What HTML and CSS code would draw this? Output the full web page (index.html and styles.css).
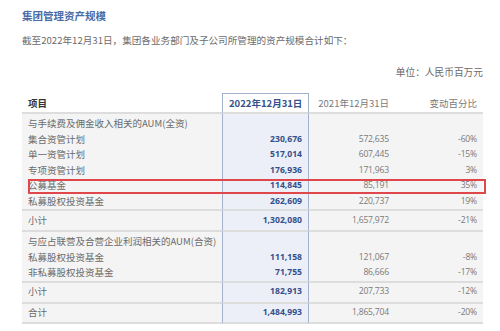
FILE: index.html
```html
<!DOCTYPE html>
<html lang="zh-CN">
<head>
  <meta charset="UTF-8">
  <meta name="viewport" content="width=device-width, initial-scale=1.0">
  <title>集团管理资产规模</title>
  <link rel="stylesheet" href="styles.css">
</head>
<body>
  <main class="report">
    <h1 class="report-title">集团管理资产规模</h1>
    <p class="report-intro">截至2022年12月31日，集团各业务部门及子公司所管理的资产规模合计如下：</p>
    <p class="report-unit">单位：人民币百万元</p>
    <div class="table-wrap">
      <table class="aum-table">
        <colgroup>
          <col class="col-name">
          <col class="col-cur">
          <col class="col-prev">
          <col class="col-pct">
        </colgroup>
        <thead>
          <tr>
            <th class="name">项目</th>
            <th class="cur">2022年12月31日</th>
            <th class="num">2021年12月31日</th>
            <th class="num">变动百分比</th>
          </tr>
        </thead>
        <tbody class="group">
          <tr>
            <td class="name">与手续费及佣金收入相关的AUM(全资)</td>
            <td class="cur"></td>
            <td class="num"></td>
            <td class="num"></td>
          </tr>
          <tr><td class="name">集合资管计划</td><td class="cur">230,676</td><td class="num">572,635</td><td class="num">-60%</td></tr>
          <tr><td class="name">单一资管计划</td><td class="cur">517,014</td><td class="num">607,445</td><td class="num">-15%</td></tr>
          <tr><td class="name">专项资管计划</td><td class="cur">176,936</td><td class="num">171,963</td><td class="num">3%</td></tr>
          <tr><td class="name">公募基金</td><td class="cur">114,845</td><td class="num">85,191</td><td class="num">35%</td></tr>
          <tr><td class="name">私募股权投资基金</td><td class="cur">262,609</td><td class="num">220,737</td><td class="num">19%</td></tr>
        </tbody>
        <tbody class="total">
          <tr><td class="name">小计</td><td class="cur">1,302,080</td><td class="num">1,657,972</td><td class="num">-21%</td></tr>
        </tbody>
        <tbody class="group">
          <tr>
            <td class="name">与应占联营及合营企业利润相关的AUM(合资)</td>
            <td class="cur"></td>
            <td class="num"></td>
            <td class="num"></td>
          </tr>
          <tr><td class="name">私募股权投资基金</td><td class="cur">111,158</td><td class="num">121,067</td><td class="num">-8%</td></tr>
          <tr><td class="name">非私募股权投资基金</td><td class="cur">71,755</td><td class="num">86,666</td><td class="num">-17%</td></tr>
        </tbody>
        <tbody class="total">
          <tr><td class="name">小计</td><td class="cur">182,913</td><td class="num">207,733</td><td class="num">-12%</td></tr>
        </tbody>
        <tbody class="total last">
          <tr><td class="name">合计</td><td class="cur">1,484,993</td><td class="num">1,865,704</td><td class="num">-20%</td></tr>
        </tbody>
      </table>
      <!-- 红框标注：公募基金 -->
      <div class="highlight-mark"></div>
    </div>
  </main>
</body>
</html>
```

FILE: styles.css
```css
:root {
  --color-title: #4a6da8;
  --color-text: #6b6b6b;
  --color-num: #7a7a7a;
  --color-cur: #34508a;
  --color-body-bg: #f4f4f4;
  --color-cur-bg: #eceff7;
  --color-cur-border: #a4b1cc;
  --color-line: #dddddd;
  --color-mark: #e0474a;
}
* {
  margin: 0;
  padding: 0;
  box-sizing: border-box;
}
body {
  background-color: #ffffff;
  font-family: "Noto Sans CJK SC", "Noto Sans", sans-serif;
  color: var(--color-text);
}
.report {
  padding: 0 17px 0 22px;
}
.report-title {
  margin-top: 9px;
  font-size: 10.5px;
  line-height: 14px;
  font-weight: 700;
  color: var(--color-title);
}
.report-intro {
  margin-top: 10px;
  font-size: 9.6px;
  line-height: 14px;
}
.report-unit {
  margin-top: 18px;
  font-size: 9.7px;
  line-height: 14px;
  text-align: right;
}
.table-wrap {
  position: relative;
  margin-top: 14px;
}
.aum-table {
  width: 100%;
  border-collapse: separate;
  border-spacing: 0;
  table-layout: fixed;
  font-size: 9.5px;
}
.col-name { width: 200px; }
.col-cur { width: 87px; }
.col-prev { width: 86px; }
.col-pct { width: 88px; }
th, td {
  padding: 0 6px;
  white-space: nowrap;
}
th {
  height: 21px;
  font-weight: 700;
  color: #333333;
  border-bottom: 2px solid var(--color-line);
  background-color: #ffffff;
}
th.name, td.name {
  text-align: left;
}
th.num {
  font-weight: 400;
  color: var(--color-num);
  text-align: right;
}
th.cur {
  color: var(--color-cur);
  text-align: right;
  border: 1px solid var(--color-cur-border);
  border-bottom: 2px solid var(--color-line);
}
td {
  height: 15.5px;
  line-height: 15.5px;
  background-color: var(--color-body-bg);
}
td.num, td.cur {
  text-align: right;
  font-family: "Open Sans", sans-serif;
  font-size: 8.6px;
}
td.num {
  color: var(--color-num);
  letter-spacing: -0.2px;
}
td.cur {
  font-weight: 700;
  color: var(--color-cur);
  background-color: var(--color-cur-bg);
  border-left: 1px solid var(--color-cur-border);
  border-right: 1px solid var(--color-cur-border);
}
.group tr:first-child td {
  padding-top: 2px;
  height: 17.5px;
}
.total td {
  height: 19px;
  border-top: 2px solid var(--color-line);
}
.total.last td {
  height: 22px;
  border-bottom: 2px solid var(--color-line);
}
.total + .group tr:first-child td {
  border-top: 2px solid var(--color-line);
}
.group + .total td {
  height: 21px;
}
.highlight-mark {
  position: absolute;
  top: 86px;
  left: 6px;
  width: 458px;
  height: 15px;
  border: 2px solid var(--color-mark);
}
```
